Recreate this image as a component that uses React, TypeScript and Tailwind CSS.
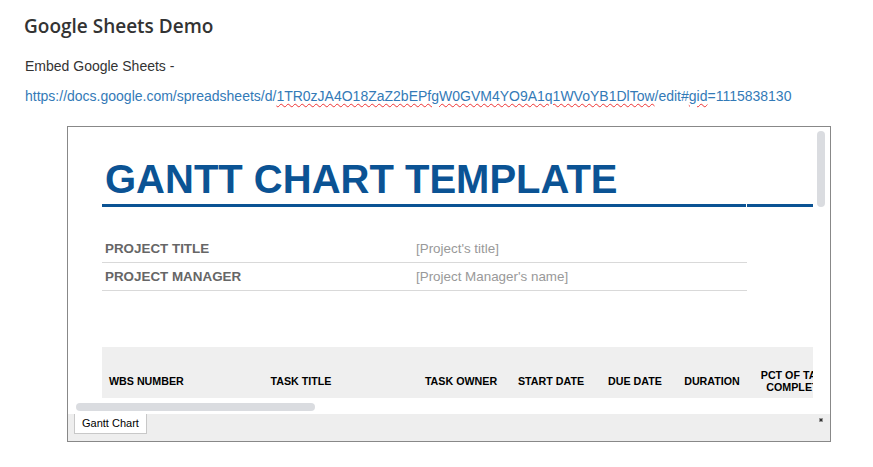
export default function App() {
  const cols = [
    { label: 'WBS NUMBER', w: 'w-[82px]', align: 'text-left pl-[7px] whitespace-nowrap' },
    { label: 'TASK TITLE', w: 'w-[234px]', align: 'text-center' },
    { label: 'TASK OWNER', w: 'w-[86px]', align: 'text-center' },
    { label: 'START DATE', w: 'w-[94px]', align: 'text-center' },
    { label: 'DUE DATE', w: 'w-[74px]', align: 'text-center' },
    { label: 'DURATION', w: 'w-[80px]', align: 'text-center' },
    { label: 'PCT OF TASK COMPLETE', w: 'w-[88px]', align: 'text-center' },
  ]

  return (
    <div className="w-[873px] h-[467px] bg-white overflow-hidden font-['Liberation_Sans',Arial,sans-serif] text-[#333]">
      <div className="pl-[24px] pt-[14px]">
        <h1 className="font-['Open_Sans',sans-serif] font-semibold text-[19px] leading-[24px] text-[#333]">Google Sheets Demo</h1>
        <p className="mt-[18px] pl-[1px] text-[14px] leading-[20px]">Embed Google Sheets -</p>
        <p className="mt-[10px] pl-[1px] text-[14px] leading-[20px] text-[#337ab7] whitespace-nowrap">
          https://docs.google.com/spreadsheets/d/
          <span className="underline decoration-wavy decoration-[#e33] decoration-1 underline-offset-2">1TR0zJA4O18ZaZ2bEPfgW0GVM4YO9A1q1WVoYB1DlTow</span>
          /edit#<span className="underline decoration-wavy decoration-[#e33] decoration-1 underline-offset-2">gid</span>=1115838130
        </p>
      </div>

      {/* embedded sheet */}
      <div className="ml-[67px] mt-[20px] w-[764px] h-[316px] border border-[#888] flex flex-col relative">
        <div className="h-[271px] overflow-hidden pl-[34px]">
          <div className="w-[711px]">
            <div className="mt-[29px] pl-[3px] text-[40px] leading-[46px] font-bold text-[#0b5394] whitespace-nowrap">
              GANTT CHART TEMPLATE
            </div>
            <div className="mt-[2px] flex gap-[1px]">
              <div className="w-[644px] h-[3px] bg-[#0b5394]" />
              <div className="w-[66px] h-[3px] bg-[#0b5394]" />
            </div>

            <div className="mt-[28px] w-[645px]">
              {[
                ['PROJECT TITLE', "[Project's title]"],
                ['PROJECT MANAGER', "[Project Manager's name]"],
              ].map(([k, v]) => (
                <div key={k} className="flex h-[28px]">
                  <div className="w-[312px] border-b border-[#d9d9d9] flex items-center pt-[2px] pl-[3px] text-[13.4px] font-bold text-[#666]">{k}</div>
                  <div className="w-[333px] border-b border-[#d9d9d9] flex items-center pt-[2px] pl-[2px] text-[13.4px] text-[#999]">{v}</div>
                </div>
              ))}
            </div>

            <div className="mt-[56px] h-[51px] bg-[#efefef] flex overflow-hidden">
              {cols.map((c) => (
                <div key={c.label} className={`${c.w} shrink-0 flex items-center pt-[17px] ${c.align} text-[10.7px] leading-[12px] font-bold text-black`}>
                  <span className="w-full">{c.label}</span>
                </div>
              ))}
            </div>
          </div>
        </div>

        {/* vertical scroll thumb */}
        <div className="absolute right-[5px] top-[4px] w-[8px] h-[76px] rounded-full bg-[#dadce0]" />

        {/* horizontal scroll */}
        <div className="h-[16px] pl-[8px] pt-[5px]">
          <div className="w-[239px] h-[8px] rounded-full bg-[#dadce0]" />
        </div>

        {/* sheet tabs */}
        <div className="flex-1 bg-[#eeeeee] flex items-start pl-[6px] relative">
          <div className="h-[20px] px-[7px] bg-white border border-t-0 border-[#c8c8c8] text-[11px] leading-[19px] text-black">Gantt Chart</div>
          <div className="absolute right-[7px] top-[4px] w-[4px] h-[4px] bg-[#333] border border-[#999]" />
        </div>
      </div>
    </div>
  )
}
